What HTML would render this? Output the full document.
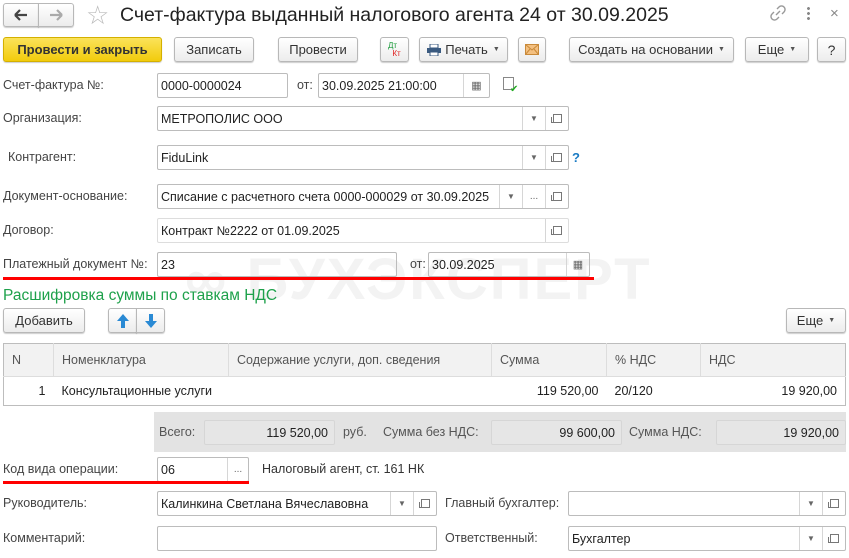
<!DOCTYPE html>
<html><head><meta charset="utf-8"><style>
*{box-sizing:border-box;margin:0;padding:0}
body{width:849px;height:558px;background:#fff;position:relative;overflow:hidden;font-family:"Liberation Sans",Arial,sans-serif;font-size:12.5px;color:#333}
.a{position:absolute}
.btn{position:absolute;border:1px solid #b8b8b8;border-radius:3px;background:linear-gradient(#fff,#ececec);box-shadow:0 1px 1px rgba(0,0,0,.2);display:flex;align-items:center;justify-content:center;color:#333;font-size:13px;white-space:nowrap}
.inp{position:absolute;border:1px solid #bcbcbc;border-radius:2px;background:#fff;height:25px;display:flex;align-items:center;padding-left:3px;color:#222;white-space:nowrap;overflow:hidden}
.sb{position:absolute;top:0;bottom:0;border-left:1px solid #d6d6d6;width:23px;display:flex;align-items:center;justify-content:center;font-size:8px;color:#666}
.lbl{position:absolute;color:#444;white-space:nowrap;height:25px;line-height:25px}
.red{position:absolute;height:3px;background:#f00}
.tri{font-size:7px;color:#555;margin-left:5px}
.op{width:9px;height:9px;border:1px solid #777;position:relative;display:block}
.op:after{content:"";position:absolute;left:-3px;top:2px;width:5px;height:5px;border:1px solid #777;border-right:none;border-top:none}
th,td{font-weight:normal;text-align:left;padding-left:8px;border-right:1px solid #ddd}
</style></head><body>
<div class="a" style="left:185px;top:246px;font-size:58px;font-weight:bold;color:#f3f3f3;letter-spacing:2px;white-space:nowrap">∞ БУХЭКСПЕРТ</div>

<div class="btn" style="left:3px;top:3px;width:36px;height:24px;border-radius:3px 0 0 3px"><svg width="14" height="12"><path d="M1 6H13M1 6L6 1M1 6L6 11" stroke="#444" stroke-width="2.2" fill="none"/></svg></div>
<div class="btn" style="left:38px;top:3px;width:36px;height:24px;border-radius:0 3px 3px 0"><svg width="14" height="12"><path d="M1 6H13M13 6L8 1M13 6L8 11" stroke="#aaa" stroke-width="2.2" fill="none"/></svg></div>
<div class="a" style="left:86px;top:0px;font-size:26px;color:#bbb">☆</div>
<div class="a" style="left:120px;top:4px;font-size:19.5px;color:#222;white-space:nowrap">Счет-фактура выданный налогового агента 24 от 30.09.2025</div>
<div class="a" style="left:770px;top:5px"><svg width="16" height="16"><path d="M6 10L10 6M7 4L9 2A3 3 0 0 1 14 7L12 9M9 12L7 14A3 3 0 0 1 2 9L4 7" stroke="#999" stroke-width="1.4" fill="none"/></svg></div>
<div class="a" style="left:807px;top:6px;width:3px;height:14px;background:radial-gradient(circle,#888 1.3px,transparent 1.6px) 0 0/3px 5px"></div>
<div class="a" style="left:830px;top:5px;font-size:15px;color:#888">×</div>

<div class="btn" style="left:3px;top:37px;width:159px;height:25px;background:linear-gradient(#fbe35a,#f2cc0c);border-color:#d4b000;font-weight:bold;color:#333">Провести и закрыть</div>
<div class="btn" style="left:174px;top:37px;width:80px;height:25px">Записать</div>
<div class="btn" style="left:278px;top:37px;width:80px;height:25px">Провести</div>
<div class="btn" style="left:380px;top:37px;width:29px;height:25px;flex-direction:column;font-size:8px;line-height:8px"><span style="color:#1a9a3a;margin-left:-4px">Дт</span><span style="color:#e02020;margin-left:4px">Кт</span></div>
<div class="btn" style="left:419px;top:37px;width:89px;height:25px"><svg width="14" height="12" style="margin-right:4px"><rect x="3" y="0" width="8" height="4" fill="#fff" stroke="#3a5a80"/><rect x="0" y="4" width="14" height="5" fill="#3a5a80"/><rect x="3" y="8" width="8" height="4" fill="#fff" stroke="#3a5a80"/></svg>Печать<span class="tri">▼</span></div>
<div class="btn" style="left:518px;top:37px;width:28px;height:25px"><svg width="14" height="11"><rect x=".5" y=".5" width="13" height="10" fill="#f4c080" stroke="#c98a3a"/><path d="M.5 .5L7 6L13.5 .5M.5 10.5L5 5M13.5 10.5L9 5" stroke="#c98a3a" fill="none"/></svg></div>
<div class="btn" style="left:569px;top:37px;width:165px;height:25px">Создать на основании<span class="tri">▼</span></div>
<div class="btn" style="left:745px;top:37px;width:64px;height:25px">Еще<span class="tri">▼</span></div>
<div class="btn" style="left:817px;top:37px;width:29px;height:25px;font-size:14px">?</div>

<div class="lbl" style="left:3px;top:73px">Счет-фактура №:</div>
<div class="inp" style="left:157px;top:73px;width:131px">0000-0000024</div>
<div class="lbl" style="left:297px;top:73px">от:</div>
<div class="inp" style="left:318px;top:73px;width:172px">30.09.2025 21:00:00<div class="sb" style="right:0;width:26px;font-size:11px">▦</div></div>
<div class="a" style="left:503px;top:77px;width:11px;height:13px;border:1px solid #888;background:#fff"></div>
<div class="a" style="left:510px;top:84px;color:#2a2;font-size:10px">✔</div>

<div class="lbl" style="left:3px;top:106px">Организация:</div>
<div class="inp" style="left:157px;top:106px;width:412px">МЕТРОПОЛИС ООО<div class="sb" style="right:23px">▼</div><div class="sb" style="right:0"><i class="op"></i></div></div>

<div class="lbl" style="left:8px;top:145px">Контрагент:</div>
<div class="inp" style="left:157px;top:145px;width:412px">FiduLink<div class="sb" style="right:23px">▼</div><div class="sb" style="right:0"><i class="op"></i></div></div>
<div class="a" style="left:572px;top:150px;color:#1a7bc4;font-size:13px;font-weight:bold">?</div>

<div class="lbl" style="left:3px;top:184px">Документ-основание:</div>
<div class="inp" style="left:157px;top:184px;width:412px">Списание с расчетного счета 0000-000029 от 30.09.2025<div class="sb" style="right:46px">▼</div><div class="sb" style="right:23px;font-size:10px">...</div><div class="sb" style="right:0"><i class="op"></i></div></div>

<div class="lbl" style="left:3px;top:218px">Договор:</div>
<div class="inp" style="left:157px;top:218px;width:412px;border-color:#ddd">Контракт №2222 от 01.09.2025<div class="sb" style="right:0"><i class="op"></i></div></div>

<div class="lbl" style="left:3px;top:252px">Платежный документ №:</div>
<div class="inp" style="left:157px;top:252px;width:240px;background:transparent">23</div>
<div class="lbl" style="left:410px;top:252px">от:</div>
<div class="inp" style="left:428px;top:252px;width:162px;background:transparent">30.09.2025<div class="sb" style="right:0;font-size:11px">▦</div></div>
<div class="red" style="left:3px;top:277px;width:591px"></div>

<div class="a" style="left:3px;top:287px;font-size:15.5px;color:#1ea14b">Расшифровка суммы по ставкам НДС</div>
<div class="btn" style="left:3px;top:308px;width:82px;height:25px">Добавить</div>
<div class="btn" style="left:108px;top:308px;width:29px;height:25px;border-radius:3px 0 0 3px"><svg width="12" height="14"><path d="M6 0L12 7H8V14H4V7H0Z" fill="#2a8ad4"/></svg></div>
<div class="btn" style="left:136px;top:308px;width:29px;height:25px;border-radius:0 3px 3px 0"><svg width="12" height="14"><path d="M6 14L12 7H8V0H4V7H0Z" fill="#2a8ad4"/></svg></div>
<div class="btn" style="left:786px;top:308px;width:60px;height:25px">Еще<span class="tri">▼</span></div>

<table class="a" style="left:3px;top:343px;width:843px;border:1px solid #bdbdbd;border-collapse:collapse;font-size:12.5px">
<tr style="height:33px;background:#f2f2f2;color:#555;border-bottom:1px solid #ddd"><th style="width:50px">N</th><th style="width:175px">Номенклатура</th><th style="width:263px">Содержание услуги, доп. сведения</th><th style="width:115px">Сумма</th><th style="width:94px">% НДС</th><th style="border-right:none">НДС</th></tr>
<tr style="height:29px;color:#222"><td style="text-align:right;padding-right:8px;border:none">1</td><td style="border:none">Консультационные услуги</td><td style="border:none"></td><td style="text-align:right;padding-right:8px;border:none">119 520,00</td><td style="border:none">20/120</td><td style="text-align:right;padding-right:8px;border:none">19 920,00</td></tr>
</table>

<div class="a" style="left:154px;top:412px;width:692px;height:40px;background:#e3e3e3"></div>
<div class="lbl" style="left:159px;top:420px;color:#555">Всего:</div>
<div class="inp" style="left:204px;top:420px;width:131px;background:#e6e6e6;border-color:#d6d6d6;justify-content:flex-end;padding-right:6px">119 520,00</div>
<div class="lbl" style="left:343px;top:420px;color:#555">руб.</div>
<div class="lbl" style="left:383px;top:420px;color:#555">Сумма без НДС:</div>
<div class="inp" style="left:491px;top:420px;width:131px;background:#e6e6e6;border-color:#d6d6d6;justify-content:flex-end;padding-right:6px">99 600,00</div>
<div class="lbl" style="left:629px;top:420px;color:#555">Сумма НДС:</div>
<div class="inp" style="left:716px;top:420px;width:130px;background:#e6e6e6;border-color:#d6d6d6;justify-content:flex-end;padding-right:6px">19 920,00</div>

<div class="lbl" style="left:3px;top:457px">Код вида операции:</div>
<div class="inp" style="left:157px;top:457px;width:92px">06<div class="sb" style="right:0;width:21px;font-size:10px">...</div></div>
<div class="lbl" style="left:262px;top:457px;color:#333">Налоговый агент, ст. 161 НК</div>
<div class="red" style="left:3px;top:481px;width:246px"></div>

<div class="lbl" style="left:3px;top:491px">Руководитель:</div>
<div class="inp" style="left:157px;top:491px;width:280px">Калинкина Светлана Вячеславовна<div class="sb" style="right:23px">▼</div><div class="sb" style="right:0"><i class="op"></i></div></div>
<div class="lbl" style="left:445px;top:491px">Главный бухгалтер:</div>
<div class="inp" style="left:568px;top:491px;width:278px"><div class="sb" style="right:23px">▼</div><div class="sb" style="right:0"><i class="op"></i></div></div>

<div class="lbl" style="left:3px;top:526px">Комментарий:</div>
<div class="inp" style="left:157px;top:526px;width:280px"></div>
<div class="lbl" style="left:445px;top:526px">Ответственный:</div>
<div class="inp" style="left:568px;top:526px;width:278px">Бухгалтер<div class="sb" style="right:23px">▼</div><div class="sb" style="right:0"><i class="op"></i></div></div>
</body></html>
